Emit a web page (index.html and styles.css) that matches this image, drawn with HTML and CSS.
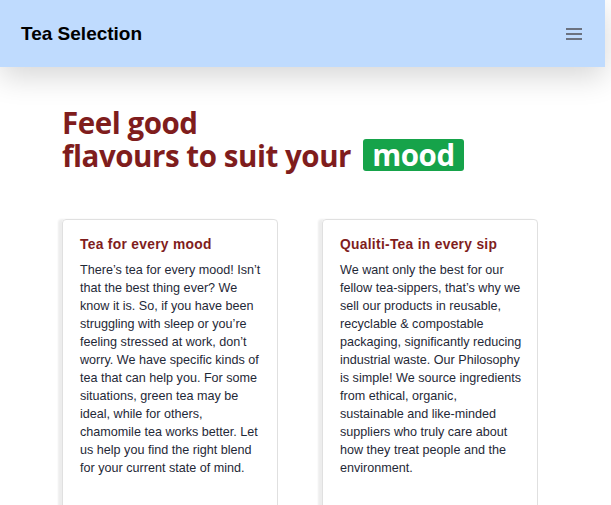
FILE: index.html
```html
<!DOCTYPE html>
<html lang="en">
<head>
<meta charset="utf-8">
<title>Tea Selection</title>
<link rel="stylesheet" href="styles.css">
</head>
<body>
<header class="topbar">
  <div class="brand">Tea Selection</div>
  <button class="menu" aria-label="Menu">
    <svg width="18" height="14" viewBox="0 0 18 14"><path d="M1 2h16M1 7h16M1 12h16" stroke="#6b7280" stroke-width="2"/></svg>
  </button>
</header>
<main class="content">
  <h1 class="hero">Feel good<br>flavours to suit your <span class="badge">mood</span></h1>
  <section class="cards">
    <article class="card">
      <h2 class="card-title">Tea for every mood</h2>
      <p class="card-text">There’s tea for every mood! Isn’t that the best thing ever? We know it is. So, if you have been struggling with sleep or you’re feeling stressed at work, don’t worry. We have specific kinds of tea that can help you. For some situations, green tea may be ideal, while for others, chamomile tea works better. Let us help you find the right blend for your current state of mind.</p>
    </article>
    <article class="card">
      <h2 class="card-title">Qualiti-Tea in every sip</h2>
      <p class="card-text">We want only the best for our fellow tea-sippers, that’s why we sell our products in reusable, recyclable &amp; compostable packaging, significantly reducing industrial waste. Our Philosophy is simple! We source ingredients from ethical, organic, sustainable and like-minded suppliers who truly care about how they treat people and the environment.</p>
    </article>
  </section>
</main>
</body>
</html>
```
FILE: styles.css
```css
* { box-sizing: border-box; }
html, body { margin: 0; padding: 0; background: #fff; overflow: hidden; }
body { font-family: "Liberation Sans", Arial, sans-serif; color: #1f2937; }

.topbar {
  height: 67px;
  width: calc(100% - 6px);
  background: #bfdbfe;
  display: flex;
  align-items: center;
  justify-content: space-between;
  padding: 0 22px 0 21px;
  box-shadow: 0 10px 30px rgba(0,0,0,0.16);
  position: relative;
}
.brand { font-weight: bold; font-size: 19px; color: #000; }
.menu { background: none; border: 0; padding: 0; display: flex; }

.content { padding: 39px 0 0 62px; }
.hero {
  margin: 0;
  font-family: "Open Sans", sans-serif;
  font-weight: 700;
  font-size: 29.5px;
  line-height: 33px;
  color: #7f1d1d;
  letter-spacing: -0.45px;
}
.badge {
  display: inline-block;
  background: #16a34a;
  color: #fff;
  border-radius: 3px;
  padding: 0 9px 0 9px;
  margin-left: 5px;
  height: 32px;
  line-height: 32px;
  vertical-align: top;
}

.cards {
  display: flex;
  gap: 44px;
  margin-top: 47px;
}
.card {
  width: 216px;
  height: 300px;
  border: 1px solid #e0e0e0;
  border-radius: 4px;
  box-shadow: -4px 0 2px rgba(0,0,0,0.07);
  padding: 16px 14px 16px 17px;
}
.card-title {
  margin: 0 0 8px;
  font-size: 13.8px;
  line-height: 17px;
  font-weight: bold;
  color: #7f1d1d;
  letter-spacing: 0.3px;
}
.card-text {
  margin: 0;
  font-size: 12.6px;
  line-height: 18px;
  color: #1f2937;
}
```
